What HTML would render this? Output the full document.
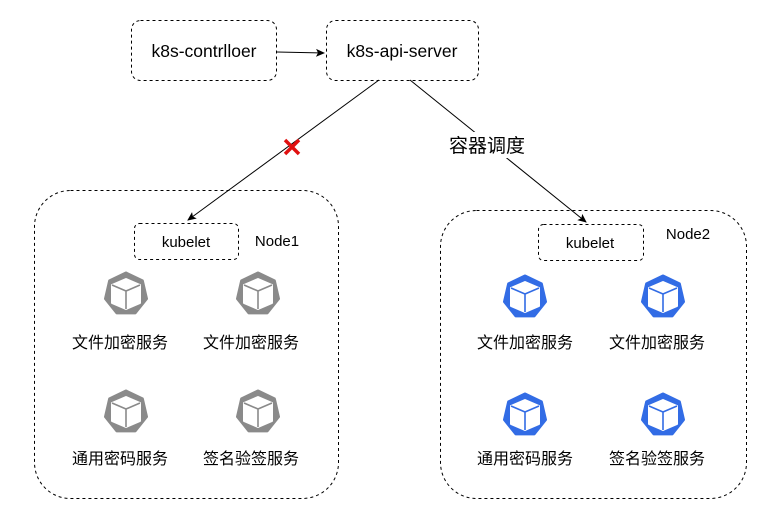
<!DOCTYPE html>
<html><head><meta charset="utf-8"><style>
html,body{margin:0;padding:0;background:#fff;}
svg{display:block;font-family:"Liberation Sans","Noto Sans CJK SC",sans-serif;}
</style></head><body>
<svg width="781" height="524" viewBox="0 0 781 524" xmlns="http://www.w3.org/2000/svg">
<defs>
<marker id="ar" markerWidth="10" markerHeight="10" refX="8" refY="5" orient="auto" markerUnits="userSpaceOnUse">
<path d="M0,1 L9,5 L0,9 L2,5 Z" fill="#000"/></marker>
<g id="cube">
<path d="M0,-21 L16.4,-13.1 L20.5,4.7 L9.1,18.9 L-9.1,18.9 L-20.5,4.7 L-16.4,-13.1 Z" stroke-linejoin="round" stroke-width="3" stroke="currentColor" fill="currentColor"/>
<path d="M0,-15 L14,-9 L14,9 L0,15 L-14,9 L-14,-9 Z" fill="#fff" stroke="#fff" stroke-linejoin="round" stroke-width="2"/>
<path d="M-14,-9 L0,-3 L14,-9 M0,-3 L0,15" stroke="currentColor" stroke-width="1.6" fill="none"/>
</g>
</defs>
<g fill="none" stroke="#000" stroke-width="1" stroke-dasharray="3,3">
<rect x="131.5" y="20.5" width="145" height="60" rx="9"/>
<rect x="326.5" y="20.5" width="152" height="60" rx="9"/>
<rect x="34.5" y="190.5" width="304" height="308" rx="36"/>
<rect x="440.5" y="210.5" width="306" height="288" rx="36"/>
<rect x="134.5" y="223.5" width="104" height="36" rx="5"/>
<rect x="538.5" y="224.5" width="105" height="36" rx="5"/>
</g>
<g stroke="#000" stroke-width="1" fill="none">
<line x1="277" y1="52" x2="324" y2="53" marker-end="url(#ar)"/>
<line x1="379" y1="80" x2="188" y2="220" marker-end="url(#ar)"/>
<line x1="410" y1="80" x2="586" y2="222" marker-end="url(#ar)"/>
</g>
<path d="M285,140 L299,154 M299,140 L285,154" stroke="#e01010" stroke-width="3.5"/>
<rect x="444" y="132" width="90" height="26" fill="#fff"/>
<g font-size="17.5" fill="#000" text-anchor="middle">
<text x="204" y="57">k8s-contrlloer</text>
<text x="402" y="57">k8s-api-server</text>
</g>
<text x="487" y="152" font-size="19" text-anchor="middle">容器调度</text>
<g font-size="15" fill="#000" text-anchor="middle">
<text x="186" y="247">kubelet</text>
<text x="590" y="248">kubelet</text>
<text x="277" y="246">Node1</text>
<text x="688" y="239">Node2</text>
</g>
<g color="#8a8a8a">
<use href="#cube" x="126" y="294"/><use href="#cube" x="258" y="294"/>
<use href="#cube" x="126" y="412"/><use href="#cube" x="258" y="412"/>
</g>
<g color="#326ce5">
<use href="#cube" x="525" y="297"/><use href="#cube" x="663" y="297"/>
<use href="#cube" x="525" y="415"/><use href="#cube" x="663" y="415"/>
</g>
<g font-size="16" fill="#000" text-anchor="middle">
<text x="120" y="348">文件加密服务</text><text x="251" y="348">文件加密服务</text>
<text x="120" y="464">通用密码服务</text><text x="251" y="464">签名验签服务</text>
<text x="525" y="348">文件加密服务</text><text x="657" y="348">文件加密服务</text>
<text x="525" y="464">通用密码服务</text><text x="657" y="464">签名验签服务</text>
</g>
</svg>
</body></html>
